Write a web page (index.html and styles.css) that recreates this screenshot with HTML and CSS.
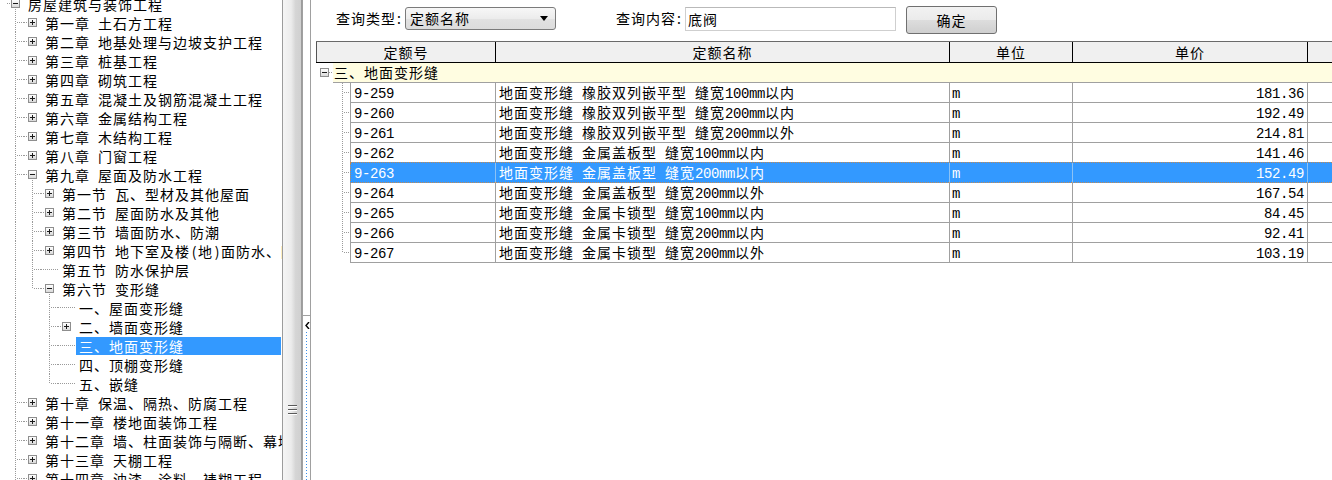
FILE: index.html
```html
<!DOCTYPE html>
<html lang="zh-CN">
<head>
<meta charset="utf-8">
<title>定额查询</title>
<link rel="stylesheet" href="styles.css">
</head>
<body>
<div class="tree-panel">
  <div class="tree">
    <div class="ti"><span class="bc bi down"><i class="bx mi"></i></span><span class="tx">房屋建筑与装饰工程</span></div>
    <div class="ti"><span class="cn"></span><span class="bc bi"><i class="bx pl"></i></span><span class="tx">第一章&ensp;土石方工程</span></div>
    <div class="ti"><span class="cn"></span><span class="bc bi"><i class="bx pl"></i></span><span class="tx">第二章&ensp;地基处理与边坡支护工程</span></div>
    <div class="ti"><span class="cn"></span><span class="bc bi"><i class="bx pl"></i></span><span class="tx">第三章&ensp;桩基工程</span></div>
    <div class="ti"><span class="cn"></span><span class="bc bi"><i class="bx pl"></i></span><span class="tx">第四章&ensp;砌筑工程</span></div>
    <div class="ti"><span class="cn"></span><span class="bc bi"><i class="bx pl"></i></span><span class="tx">第五章&ensp;混凝土及钢筋混凝土工程</span></div>
    <div class="ti"><span class="cn"></span><span class="bc bi"><i class="bx pl"></i></span><span class="tx">第六章&ensp;金属结构工程</span></div>
    <div class="ti"><span class="cn"></span><span class="bc bi"><i class="bx pl"></i></span><span class="tx">第七章&ensp;木结构工程</span></div>
    <div class="ti"><span class="cn"></span><span class="bc bi"><i class="bx pl"></i></span><span class="tx">第八章&ensp;门窗工程</span></div>
    <div class="ti"><span class="cn"></span><span class="bc bi down"><i class="bx mi"></i></span><span class="tx">第九章&ensp;屋面及防水工程</span></div>
    <div class="ti"><span class="g v"></span><span class="cn"></span><span class="bc bi"><i class="bx pl"></i></span><span class="tx">第一节&ensp;瓦、型材及其他屋面</span></div>
    <div class="ti"><span class="g v"></span><span class="cn"></span><span class="bc bi"><i class="bx pl"></i></span><span class="tx">第二节&ensp;屋面防水及其他</span></div>
    <div class="ti"><span class="g v"></span><span class="cn"></span><span class="bc bi"><i class="bx pl"></i></span><span class="tx">第三节&ensp;墙面防水、防潮</span></div>
    <div class="ti"><span class="g v"></span><span class="cn"></span><span class="bc bi"><i class="bx pl"></i></span><span class="tx">第四节&ensp;地下室及楼<span class="p">(</span>地<span class="p">)</span>面防水、防潮</span></div>
    <div class="ti"><span class="g v"></span><span class="cn"></span><span class="bc lf"></span><span class="tx">第五节&ensp;防水保护层</span></div>
    <div class="ti"><span class="g v"></span><span class="cn last"></span><span class="bc bi down"><i class="bx mi"></i></span><span class="tx">第六节&ensp;变形缝</span></div>
    <div class="ti"><span class="g v"></span><span class="g"></span><span class="cn"></span><span class="bc lf"></span><span class="tx">一、屋面变形缝</span></div>
    <div class="ti"><span class="g v"></span><span class="g"></span><span class="cn"></span><span class="bc bi"><i class="bx pl"></i></span><span class="tx">二、墙面变形缝</span></div>
    <div class="ti"><span class="g v"></span><span class="g"></span><span class="cn"></span><span class="bc lf"></span><span class="tx sel">三、地面变形缝</span></div>
    <div class="ti"><span class="g v"></span><span class="g"></span><span class="cn"></span><span class="bc lf"></span><span class="tx">四、顶棚变形缝</span></div>
    <div class="ti"><span class="g v"></span><span class="g"></span><span class="cn last"></span><span class="bc lf"></span><span class="tx">五、嵌缝</span></div>
    <div class="ti"><span class="cn"></span><span class="bc bi"><i class="bx pl"></i></span><span class="tx">第十章&ensp;保温、隔热、防腐工程</span></div>
    <div class="ti"><span class="cn"></span><span class="bc bi"><i class="bx pl"></i></span><span class="tx">第十一章&ensp;楼地面装饰工程</span></div>
    <div class="ti"><span class="cn"></span><span class="bc bi"><i class="bx pl"></i></span><span class="tx">第十二章&ensp;墙、柱面装饰与隔断、幕墙工程</span></div>
    <div class="ti"><span class="cn"></span><span class="bc bi"><i class="bx pl"></i></span><span class="tx">第十三章&ensp;天棚工程</span></div>
    <div class="ti"><span class="cn"></span><span class="bc bi"><i class="bx pl"></i></span><span class="tx">第十四章&ensp;油漆、涂料、裱糊工程</span></div>
  </div>
</div>

<div class="vscroll"><div class="grip"></div></div>

<div class="split">
  <div class="split-top"></div>
  <div class="split-box">
    <svg class="arrow" width="5" height="7" viewBox="0 0 5 7"><path d="M4 0 L1 3.5 L4 7" fill="none" stroke="#000" stroke-width="1.4"/></svg>
    <div class="split-dots"></div>
  </div>
</div>

<div class="main">
  <div class="toolbar">
    <span class="lbl">查询类型<span class="colon">:</span></span>
    <div class="select"><span>定额名称</span><svg width="8" height="5" viewBox="0 0 8 5"><path d="M0 0 H8 L4 5 Z" fill="#000"/></svg></div>
    <span class="lbl lbl2">查询内容<span class="colon">:</span></span>
    <div class="input">底阀</div>
    <div class="btn">确定</div>
  </div>

  <div class="grid">
    <div class="gh">
      <div class="h h1">定额号</div>
      <div class="h h2">定额名称</div>
      <div class="h h3">单位</div>
      <div class="h h4">单价</div>
      <div class="h h5"></div>
    </div>
    <div class="gr">
      <div class="gtl"><i class="bx mi"></i></div>
      <div class="gtext">三、地面变形缝</div>
    </div>

    <div class="dr"><div class="dtl"></div><div class="dc"><div class="c code"><span class="n">9-259</span></div><div class="c name">地面变形缝&ensp;橡胶双列嵌平型&ensp;缝宽<span class="n">100mm</span>以内</div><div class="c unit"><span class="n">m</span></div><div class="c price"><span class="n">181.36</span></div><div class="c extra"></div></div></div>
    <div class="dr"><div class="dtl"></div><div class="dc"><div class="c code"><span class="n">9-260</span></div><div class="c name">地面变形缝&ensp;橡胶双列嵌平型&ensp;缝宽<span class="n">200mm</span>以内</div><div class="c unit"><span class="n">m</span></div><div class="c price"><span class="n">192.49</span></div><div class="c extra"></div></div></div>
    <div class="dr"><div class="dtl"></div><div class="dc"><div class="c code"><span class="n">9-261</span></div><div class="c name">地面变形缝&ensp;橡胶双列嵌平型&ensp;缝宽<span class="n">200mm</span>以外</div><div class="c unit"><span class="n">m</span></div><div class="c price"><span class="n">214.81</span></div><div class="c extra"></div></div></div>
    <div class="dr"><div class="dtl"></div><div class="dc"><div class="c code"><span class="n">9-262</span></div><div class="c name">地面变形缝&ensp;金属盖板型&ensp;缝宽<span class="n">100mm</span>以内</div><div class="c unit"><span class="n">m</span></div><div class="c price"><span class="n">141.46</span></div><div class="c extra"></div></div></div>
    <div class="dr"><div class="dtl"></div><div class="dc sel"><div class="c code"><span class="n">9-263</span></div><div class="c name">地面变形缝&ensp;金属盖板型&ensp;缝宽<span class="n">200mm</span>以内</div><div class="c unit"><span class="n">m</span></div><div class="c price"><span class="n">152.49</span></div><div class="c extra"></div></div></div>
    <div class="dr"><div class="dtl"></div><div class="dc"><div class="c code"><span class="n">9-264</span></div><div class="c name">地面变形缝&ensp;金属盖板型&ensp;缝宽<span class="n">200mm</span>以外</div><div class="c unit"><span class="n">m</span></div><div class="c price"><span class="n">167.54</span></div><div class="c extra"></div></div></div>
    <div class="dr"><div class="dtl"></div><div class="dc"><div class="c code"><span class="n">9-265</span></div><div class="c name">地面变形缝&ensp;金属卡锁型&ensp;缝宽<span class="n">100mm</span>以内</div><div class="c unit"><span class="n">m</span></div><div class="c price"><span class="n">84.45</span></div><div class="c extra"></div></div></div>
    <div class="dr"><div class="dtl"></div><div class="dc"><div class="c code"><span class="n">9-266</span></div><div class="c name">地面变形缝&ensp;金属卡锁型&ensp;缝宽<span class="n">200mm</span>以内</div><div class="c unit"><span class="n">m</span></div><div class="c price"><span class="n">92.41</span></div><div class="c extra"></div></div></div>
    <div class="dr"><div class="dtl last"></div><div class="dc"><div class="c code"><span class="n">9-267</span></div><div class="c name">地面变形缝&ensp;金属卡锁型&ensp;缝宽<span class="n">200mm</span>以外</div><div class="c unit"><span class="n">m</span></div><div class="c price"><span class="n">103.19</span></div><div class="c extra"></div></div></div>
  </div>
</div>
</body>
</html>
```

FILE: styles.css
```css
:root {
  --vdot: repeating-linear-gradient(to bottom, #9a9a9a 0 1px, transparent 1px 2px);
  --hdot: repeating-linear-gradient(to right, #9a9a9a 0 1px, transparent 1px 2px);
}
* { box-sizing: border-box; }
html, body {
  margin: 0;
  height: 480px;
  overflow: hidden;
  background: #fff;
}
body {
  display: flex;
  font-family: "Noto Sans CJK SC", "Noto Sans", sans-serif;
  font-size: 14px;
  letter-spacing: 1px;
  color: #000;
}

/* ---------- tree ---------- */
.tree-panel {
  width: 282px;
  flex: none;
  overflow: hidden;
}
.tree { margin-top: -6px; }
.ti {
  display: flex;
  height: 19px;
  padding-left: 7px;
  white-space: nowrap;
}
.g, .cn { width: 17px; flex: none; }
.g.v { background: var(--vdot) 8px 0 / 1px 19px no-repeat; }
.cn {
  background:
    var(--hdot) 10px 9px / 7px 1px no-repeat,
    var(--vdot) 8px 0 / 1px 19px no-repeat;
}
.cn.last {
  background:
    var(--hdot) 10px 9px / 7px 1px no-repeat,
    var(--vdot) 8px 0 / 1px 10px no-repeat;
}
.bc {
  width: 18px;
  flex: none;
  display: flex;
  align-items: center;
}
.bc.lf { background: var(--hdot) 0 9px / 17px 1px no-repeat; }
.bc.bi { background: var(--hdot) 0 9px / 4px 1px no-repeat; }
.bc.bi.down {
  background:
    var(--hdot) 0 9px / 4px 1px no-repeat,
    var(--vdot) 8px 15px / 1px 4px no-repeat;
}
.bx {
  display: block;
  width: 9px;
  height: 9px;
  margin-left: 4px;
  border: 1px solid #8e8e8e;
  flex: none;
}
.bx.pl {
  background:
    linear-gradient(#1a1a1a, #1a1a1a) center / 5px 1px no-repeat,
    linear-gradient(#1a1a1a, #1a1a1a) center / 1px 5px no-repeat,
    linear-gradient(#ffffff, #d9d9d9);
}
.bx.mi {
  background:
    linear-gradient(#1a1a1a, #1a1a1a) center / 5px 1px no-repeat,
    linear-gradient(#ffffff, #d9d9d9);
}
.tx {
  padding-left: 3px;
  height: 18px;
  line-height: 18px;
  align-self: center;
}
.tx .p {
  display: inline-block;
  width: 8px;
  text-align: center;
  letter-spacing: 0;
}
.tx.sel {
  flex: 1;
  background: #3399ff;
  color: #fff;
  margin-right: 1px;
}

/* ---------- scrollbar + splitter ---------- */
.vscroll {
  width: 20px;
  flex: none;
  border-left: 1px solid #9c9c9c;
  border-right: 1px solid #9c9c9c;
  background: linear-gradient(to right, #f5f5f5 0, #ececec 45%, #d5d5d5 70%, #d0d0d0 100%);
}
.grip {
  width: 9px;
  height: 10px;
  margin: 405px auto 0;
  background: repeating-linear-gradient(to bottom, #5a5a5a 0 1px, #ffffff 1px 2px, transparent 2px 4px);
}
.split {
  width: 9px;
  flex: none;
  display: flex;
  flex-direction: column;
  border-left: 1px solid #a0a0a0;
  border-right: 1px solid #a0a0a0;
}
.split-top { height: 315px; flex: none; }
.split-box {
  flex: 1;
  border-top: 1px solid #a0a0a0;
  display: flex;
  flex-direction: column;
}
.arrow { margin: 6px 0 0 2px; display: block; }
.split-dots {
  flex: 1;
  margin: 3px 0 0 3px;
  width: 1px;
  background: repeating-linear-gradient(to bottom, #3b8ee8 0 1px, transparent 1px 3px);
}

/* ---------- main ---------- */
.main {
  flex: 1;
  min-width: 0;
  overflow: hidden;
  display: flex;
  flex-direction: column;
}
.toolbar {
  height: 41px;
  flex: none;
  display: flex;
  align-items: flex-start;
  padding: 6px 0 0 25px;
  white-space: nowrap;
}
.lbl {
  width: 69px;
  flex: none;
  line-height: 23px;
  margin-top: 1px;
}
.colon { letter-spacing: 0; margin-left: 1px; }
.lbl2 { margin-left: 60px; }
.select {
  width: 151px;
  height: 23px;
  margin-top: 1px;
  flex: none;
  border: 1px solid #7b7b7b;
  border-radius: 3px;
  background: linear-gradient(#f7f7f7, #ececec 50%, #e2e2e2 51%, #dcdcdc);
  display: flex;
  align-items: center;
  justify-content: space-between;
  padding: 0 7px 0 4px;
  line-height: 21px;
}
.input {
  width: 211px;
  height: 24px;
  margin-top: 1px;
  flex: none;
  border: 1px solid #cfcfcf;
  border-top-color: #b9b9b9;
  background: #fff;
  padding-left: 2px;
  line-height: 22px;
}
.btn {
  width: 91px;
  height: 28px;
  margin-left: 10px;
  flex: none;
  border: 1px solid #707070;
  border-radius: 3px;
  background: linear-gradient(#f2f2f2, #ebebeb 50%, #dddddd 51%, #cfcfcf);
  text-align: center;
  line-height: 26px;
}

/* ---------- grid ---------- */
.grid {
  margin-left: 5px;
  width: 1100px;
  flex: none;
}
.gh {
  display: flex;
  height: 22px;
  border-top: 1px solid #6a6a6a;
  border-bottom: 1px solid #000;
  background: #f0f0f0;
}
.h {
  border-left: 1px solid #000;
  text-align: center;
  line-height: 20px;
  flex: none;
}
.h1 { width: 179px; border-left-color: #555; }
.h2 { width: 454px; }
.h3 { width: 123px; }
.h4 { width: 235px; }
.h5 { width: 109px; }

.gr {
  display: flex;
  height: 20px;
}
.gtl {
  width: 17px;
  flex: none;
  display: flex;
  align-items: center;
  background: var(--hdot) 13px 9px / 4px 1px no-repeat;
}
.gtl .bx { margin-left: 4px; margin-top: -1px; }
.gtext {
  flex: 1;
  background: #fffde1;
  border-bottom: 1px solid #a0a0a0;
  line-height: 19px;
  padding-left: 1px;
}

.dr {
  display: flex;
  height: 20px;
}
.dtl {
  width: 34px;
  flex: none;
  background:
    var(--hdot) 28px 9px / 6px 1px no-repeat,
    var(--vdot) 26px 0 / 1px 20px no-repeat;
}
.dtl.last {
  background:
    var(--hdot) 28px 9px / 6px 1px no-repeat,
    var(--vdot) 26px 0 / 1px 10px no-repeat;
}
.dc {
  display: flex;
  flex: 1;
  white-space: nowrap;
}
.c {
  flex: none;
  border-left: 1px solid #a0a0a0;
  border-bottom: 1px solid #a0a0a0;
  line-height: 19px;
  overflow: hidden;
}
.code { width: 145px; padding-left: 3px; }
.name { width: 454px; padding-left: 3px; }
.unit { width: 123px; padding-left: 2px; }
.price { width: 235px; padding-right: 3px; text-align: right; }
.extra { width: 109px; }
.n {
  font-family: "Liberation Mono", "DejaVu Sans Mono", monospace;
  font-size: 14px;
  letter-spacing: -0.4px;
}

.dc.sel {
  margin-top: -1px;
  height: 21px;
  border-top: 1px dotted #c08a55;
  background: #3399ff;
  color: #fff;
}
.dc.sel .c {
  border-bottom: 1px dotted #c08a55;
  border-left-color: #8cc2f5;
}
.dc.sel .code { border-left: 1px dotted #c08a55; }
```
